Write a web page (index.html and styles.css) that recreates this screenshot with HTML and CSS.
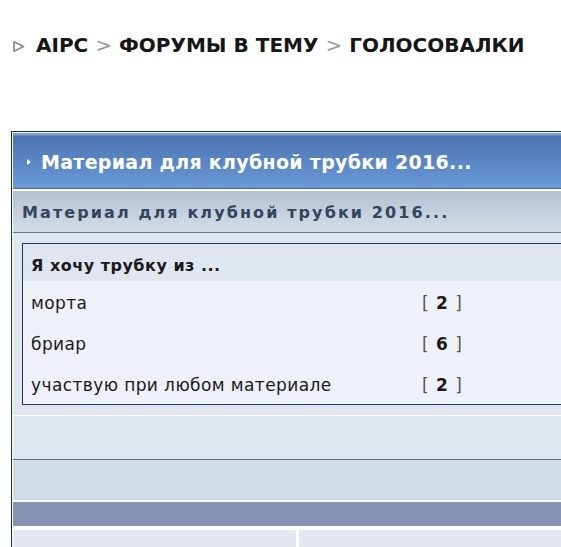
FILE: index.html
```html
<!DOCTYPE html>
<html lang="ru">
<head>
<meta charset="utf-8">
<link rel="stylesheet" href="styles.css">
</head>
<body>
<div class="page">
  <div class="crumbs">
    <span class="crumb-icon"><svg width="13" height="13" viewBox="0 0 13 13"><path d="M2 1.8 L11.5 6.5 L2 11.2 Z" fill="none" stroke="#8a8a8a" stroke-width="1.7" stroke-linejoin="round"/></svg></span>
    <span class="crumb">AIPC</span>
    <span class="sep">&gt;</span>
    <span class="crumb">ФОРУМЫ В ТЕМУ</span>
    <span class="sep">&gt;</span>
    <span class="crumb">ГОЛОСОВАЛКИ</span>
  </div>

  <div class="board">
    <div class="title-bar">
      <svg class="title-arrow" width="6" height="8" viewBox="0 0 6 8"><path d="M1 1 L5 4 L1 7 Z" fill="#ffffff"/></svg>
      <span>Материал для клубной трубки 2016...</span>
    </div>
    <div class="sub-bar">Материал для клубной трубки 2016...</div>
    <div class="poll-area">
      <div class="poll">
        <div class="poll-q">Я хочу трубку из ...</div>
        <div class="poll-row"><span class="opt">морта</span><span class="votes">[ <b>2</b> ]</span></div>
        <div class="poll-row"><span class="opt">бриар</span><span class="votes">[ <b>6</b> ]</span></div>
        <div class="poll-row"><span class="opt">участвую при любом материале</span><span class="votes">[ <b>2</b> ]</span></div>
      </div>
    </div>
    <div class="row-a"></div>
    <div class="row-b"></div>
    <div class="row-c"></div>
    <div class="row-d">
      <div class="cell"></div>
      <div class="cell"></div>
    </div>
  </div>
</div>
</body>
</html>
```

FILE: styles.css
```css
html, body {
  margin: 0;
  padding: 0;
  background: #ffffff;
  overflow: hidden;
}
body {
  font-family: "DejaVu Sans", Verdana, sans-serif;
  color: #1a1a1a;
}
.page {
  width: 561px;
  height: 547px;
  overflow: hidden;
  padding-top: 33px;
  box-sizing: border-box;
}
.crumbs {
  display: flex;
  align-items: center;
  gap: 7px;
  padding-left: 12px;
  height: 24px;
  font-size: 20px;
  font-weight: bold;
}
.crumb-icon {
  display: flex;
  width: 17px;
  margin-top: 2px;
}
.crumb { color: #161616; }
.sep {
  color: #9a9a9a;
  font-weight: normal;
}
.board {
  margin-top: 74px;
  margin-left: 11px;
  width: 620px;
  border: 1px solid #1b2c45;
  border-right: none;
  padding: 1px 0 0 1px;
  background: #ffffff;
}
.title-bar {
  height: 55px;
  display: flex;
  align-items: center;
  gap: 9px;
  padding-left: 13px;
  background: linear-gradient(#7aa0d4 0px, #7aa0d4 2px, #4c74b1 3px, #5a87c6 30px, #6a9ad9 55px);
  border-bottom: 1px solid #4d6586;
  color: #ffffff;
  font-size: 19px;
  font-weight: bold;
  letter-spacing: 0.3px;
}
.title-bar span { margin-top: 3px; }
.title-arrow { margin-top: 3px; }
.sub-bar {
  margin-top: 2px;
  height: 42px;
  display: flex;
  align-items: center;
  padding-left: 9px;
  padding-top: 2px;
  box-sizing: border-box;
  background: linear-gradient(#b4c2d3, #d3dde9);
  border-bottom: 1px solid #66798c;
  color: #34465c;
  font-size: 16px;
  font-weight: bold;
  letter-spacing: 2.1px;
}
.poll-area {
  background: #dfe6f0;
  padding: 10px 0 10px 9px;
}
.poll {
  border: 1px solid #1f3460;
  border-right: none;
  background: #eef1f7;
}
.poll-q {
  height: 37px;
  display: flex;
  align-items: center;
  padding-left: 8px;
  padding-top: 5px;
  box-sizing: border-box;
  background: #dfe6f0;
  font-size: 16px;
  font-weight: bold;
  letter-spacing: 0.5px;
  color: #1a1a1a;
}
.poll-row {
  height: 41px;
  display: flex;
  align-items: center;
  padding-left: 8px;
  padding-top: 3px;
  box-sizing: border-box;
  font-size: 17px;
  letter-spacing: 0.4px;
  color: #1a1a1a;
}
.opt { width: 391px; }
.votes { color: #555; letter-spacing: 1px; font-size: 17px; }
.votes b { color: #1a1a1a; }
.row-a {
  height: 43px;
  background: #dfe6f0;
  border-top: 1px solid #ffffff;
  border-bottom: 1px solid #5a6878;
}
.row-b {
  height: 40px;
  background: #d0dde9;
  border-bottom: 2px solid #ffffff;
}
.row-c {
  height: 24px;
  background: #8494b0;
  border-bottom: 4px solid #ffffff;
}
.row-d {
  display: flex;
  gap: 3px;
  height: 30px;
}
.cell {
  background: #e3e8f0;
  width: 283px;
}
.cell + .cell { flex: 1; }
```
